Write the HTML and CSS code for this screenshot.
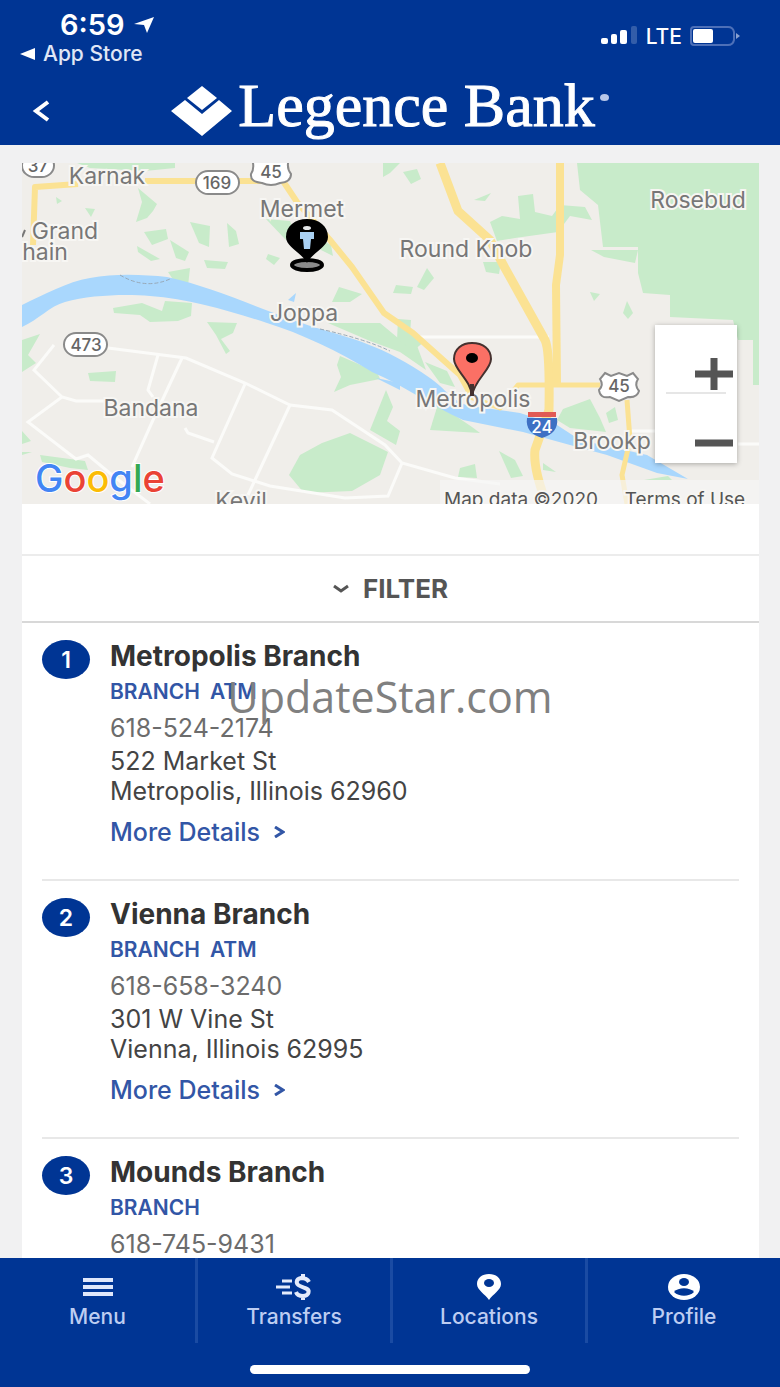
FILE: index.html
```html
<!DOCTYPE html>
<html lang="en">
  <head>
    <meta charset="UTF-8" />
    <meta name="viewport" content="width=device-width, initial-scale=1.0" />
    <title>Legence Bank - Locations</title>
    <link rel="stylesheet" href="styles.css">
  </head>
  <body>
    <header class="header">
      <div class="statusBar">
        <div class="statusLeft">
          <div class="clock">
            6:59
            <svg width="22" height="18" viewBox="0 0 22 18"><path d="M1 8 21 1 14 17 11 9Z" fill="#fff" /></svg>
          </div>
          <a href="#" class="appStore">
            <svg width="15" height="12" viewBox="0 0 15 12"><path d="M0 6 15 0V12Z" fill="#fff" /></svg>
            App Store
          </a>
        </div>
        <div class="statusRight">
          <svg width="38" height="20" viewBox="0 0 38 20" fill="#fff">
            <rect x="1" y="12" width="7" height="6" rx="2" />
            <rect x="11" y="8" width="6" height="10" rx="2" />
            <rect x="20" y="4" width="7" height="14" rx="2" />
            <rect x="31" y="0" width="6" height="18" rx="2" opacity="0.2" />
          </svg>
          <span>LTE</span>
          <svg width="50" height="20" viewBox="0 0 50 20">
            <path d="M4 1H38Q43 1 44 6V14Q43 19 38 19H4Q1 19 1 16V4Q1 1 4 1Z" fill="none" stroke="#4d70b8" stroke-width="2" />
            <path d="M46 7 50 10 46 13Z" fill="#8aa1d0" />
            <rect x="3" y="3" width="20" height="14" rx="2" fill="#fff" />
          </svg>
        </div>
      </div>
      <div class="titleBar">
        <button class="backButton" aria-label="Back">
          <svg width="18" height="22" viewBox="0 0 18 22"><path d="M16 2 4 11 16 20" fill="none" stroke="#fff" stroke-width="4" /></svg>
        </button>
        <div class="logo">
          <svg width="62" height="50" viewBox="0 0 62 50" fill="#fff">
            <path d="M31 0 46 12 31 24 16 12Z" />
            <path d="M14 14 31 28 48 14 61 25 31 50 0 25Z" />
          </svg>
          <span class="logoText">Legence Bank</span>
          <span class="logoDot"></span>
        </div>
      </div>
    </header>

    <main class="content">
      <div class="panel">
        <!-- Map -->
        <div class="map">
          <svg class="mapDrawing" viewBox="22 163 737 341">
            <rect x="22" y="163" width="737" height="341" fill="#f0eeea" />
            <!-- Parks and woods -->
            <g fill="#c8ebca">
              <path d="M577 163 580 190 598 205 603 247 638 247 638 273 643 293 670 295V317L733 320 738 340H753V385H759V163Z" />
              <path d="M77 163H175V168L145 171 90 168Z" />
              <path d="M383 163H400L390 173 383 177Z" />
              <path d="M403 172 417 169 421 179 411 184Z" />
              <path d="M518 196 533 194 535 212 552 216 560 205 585 207 592 220 570 216 558 232 515 238 497 241 490 222 502 216 520 219Z" />
              <path d="M474 200 491 193 485 201Z" />
              <path d="M138 188 157 204 153 211 147 218 136 222 142 202Z" />
              <path d="M85 208 95 209 91 217Z" />
              <path d="M56 197 62 201 57 204Z" />
              <path d="M144 232 166 229 168 239 152 245Z" />
              <path d="M190 222 210 226 209 247 199 243Z" />
              <path d="M227 223 236 231 239 244 229 247Z" />
              <path d="M137 246 160 259 151 261 138 252Z" />
              <path d="M170 240 189 252 185 261 176 258Z" />
              <path d="M204 260 228 262 225 269 207 268Z" />
              <path d="M168 272 190 268 188 286 174 281Z" />
              <path d="M266 219 290 221 302 250 285 239Z" />
              <path d="M316 237 331 245 333 256 321 250Z" />
              <path d="M268 254 280 258 274 265 266 259Z" />
              <path d="M339 287 362 294 350 302 332 302Z" />
              <path d="M328 323 380 323 398 338 416 343 426 370 400 352 370 341Z" />
              <path d="M398 319 411 320 410 334 424 342 414 350 397 340Z" />
              <path d="M425 362 447 371 455 387 440 383Z" />
              <path d="M483 262 501 262 499 274 486 272Z" />
              <path d="M427 268 434 278 424 290 417 287Z" />
              <path d="M396 285 413 287 411 294 393 293Z" />
              <path d="M590 292 600 294 594 301Z" />
              <path d="M627 301 633 313 628 319 623 313Z" />
              <path d="M591 250 638 250 635 263 604 257Z" />
              <path d="M113 308 142 303 162 311 165 301 192 303 191 316 178 321 150 322 140 315 114 313Z" />
              <path d="M207 322 237 323 233 333 221 339 230 351 226 354 216 335Z" />
              <path d="M22 340 40 334 28 355 36 363 22 372Z" />
              <path d="M88 373 116 371 115 382 90 381Z" />
              <path d="M340 356 377 372 380 379 350 385 334 392 341 377 337 365Z" />
              <path d="M386 390 393 407 387 421 400 431 396 445 370 430Z" />
              <path d="M300 455 322 443 350 433 388 452 380 475 352 491 304 493 289 475Z" />
              <path d="M40 455 85 461 88 470 70 468 42 462Z" />
              <path d="M22 431 31 441 22 444ZM22 452 32 452 22 455Z" />
              <path d="M438 404 472 427 480 433 430 430Z" />
              <path d="M563 409 590 399 600 418 606 432 570 428 557 420Z" />
              <path d="M606 413 615 407 618 420 609 423Z" />
              <path d="M460 468 475 464 477 478 458 477Z" />
              <path d="M499 451 515 460 523 476 511 478Z" />
              <path d="M644 480 668 476 672 480ZM543 463 556 472 543 470Z" />
            </g>
            <!-- Minor roads -->
            <g fill="none" stroke="#fbfbf9" stroke-width="3">
              <path d="M54 345 34 370 62 397 76 401H104" />
              <path d="M62 397 28 422 76 459 88 455 112 475 150 504" />
              <path d="M108 348 186 358 245 383 290 405 332 410 385 445 402 463 455 478 500 484" />
              <path d="M158 355 148 390 153 397M182 358 153 420 132 467M245 384 212 458 232 474 270 486 345 498 388 496 402 463" />
              <path d="M185 428 188 433 214 442M290 405 248 495" />
              <path d="M420 337H549M627 431H655M738 444H759" />
            </g>
            <!-- River -->
            <path d="M22 305C45 294 67 282 90 278C117 273 145 275 167 277C217 288 255 308 317 328C350 338 383 345 430 378C445 388 452 402 470 406L520 413 557 425 580 440 647 455 688 479 657 473 607 455 570 445 523 432 463 420C430 405 405 386 372 372C340 352 300 333 267 323C230 311 190 299 150 296C125 294 90 295 65 302C50 306 38 320 22 327Z" fill="#a9d7fd" />
            <path d="M288 300 296 293 294 302ZM376 378 400 390 400 383Z" fill="#a9d7fd" />
            <path d="M120 275Q145 290 170 279M320 329Q365 339 390 351" fill="none" stroke="#98a9b8" stroke-width="1" stroke-dasharray="4 2" />
            <!-- Highways -->
            <g fill="none" stroke="#fbe293" stroke-width="7" stroke-linejoin="round">
              <path d="M33 245 35 187 78 184M145 181H283L297 202 330 240 352 267 384 313 413 333 460 375 470 393" stroke-width="6" />
              <path d="M440 163 458 211 490 240 505 268 545 340Q550 350 549 410L535 450Q533 467 545 500" stroke-width="9" />
              <path d="M560 163V255L556 285 557 384" stroke-width="8" />
              <path d="M470 397 500 408 518 385H600M627 400 630 440 622 475 627 504" stroke-width="5" />
            </g>
            <rect x="440" y="480" width="319" height="24" fill="#f5f5f5" opacity="0.7" />

            <!-- Road shields -->
            <g fill="#fff" stroke="#8a8a8a" stroke-width="2">
              <rect x="22" y="154" width="32" height="23" rx="12" />
              <rect x="196" y="171" width="43" height="23" rx="12" />
              <rect x="64" y="333" width="43" height="23" rx="12" />
              <path d="M252 159H289Q286 168 291 174 291 182 280 183 271 187 262 183 250 182 251 174 255 168 252 159Z" />
              <path d="M605 373 611 376 619 373 627 376 633 373 638 379Q634 385 639 391 637 398 628 397L619 401 610 397Q600 399 599 390 604 385 600 379Z" />
            </g>
            <path d="M528 412H556V417H528Z" fill="#e05a54" />
            <path d="M527 418H557Q559 433 542 438 525 433 527 418Z" fill="#3d70c4" />
            <g class="shieldText">
              <text x="38" y="172">37</text>
              <text x="217" y="189">169</text>
              <text x="271" y="178">45</text>
              <text x="86" y="351">473</text>
              <text x="619" y="392">45</text>
              <text x="542" y="433" class="interstate">24</text>
            </g>

            <!-- Place names -->
            <g class="placeText">
              <text x="107" y="184">Karnak</text>
              <text x="302" y="217">Mermet</text>
              <text x="65" y="239">Grand</text>
              <text x="45" y="260">hain</text>
              <text x="304" y="321">Joppa</text>
              <text x="466" y="257">Round Knob</text>
              <text x="698" y="208">Rosebud</text>
              <text x="151" y="416">Bandana</text>
              <text x="473" y="407">Metropolis</text>
              <text x="612" y="449">Brookp</text>
              <text x="241" y="509">Kevil</text>
            </g>
            <path d="M22 237 25 230" stroke="#777" stroke-width="2" />
            <g class="mapNote">
              <text x="521" y="506">Map data ©2020</text>
              <text x="685" y="506">Terms of Use</text>
            </g>
            <text x="35" y="492" class="googleText"><tspan fill="#4285f4">G</tspan><tspan fill="#ea4335">o</tspan><tspan fill="#fbbc05">o</tspan><tspan fill="#4285f4">g</tspan><tspan fill="#34a853">l</tspan><tspan fill="#ea4335">e</tspan></text>

            <!-- Markers -->
            <ellipse cx="307" cy="265" rx="15" ry="5" fill="#8a8a8a" stroke="#000" stroke-width="4" />
            <path d="M307 263C300 251 286 247 286 237 286 226 295 219 307 219 319 219 328 226 328 237 328 247 314 251 307 263Z" fill="#000" />
            <ellipse cx="307" cy="228" rx="4" ry="2" fill="#e5e8ea" />
            <path d="M300 232H314V239H311L310 249H304L303 239H300Z" fill="#a9d0f2" />
            <path d="M472 396C471 380 454 370 454 359 454 349 462 343 472 343 483 343 491 349 491 359 491 370 474 380 472 396Z" fill="#fb7065" stroke="#45312f" stroke-width="2" />
            <path d="M472 396V384" stroke="#45312f" stroke-width="4" />
            <ellipse cx="472" cy="358" rx="6" ry="5" fill="#000" />
          </svg>
          <div class="zoomControl">
            <button class="zoomButton" aria-label="Zoom in">
              <svg width="38" height="32" viewBox="0 0 38 32"><path d="M0 16H38M19 0V32" stroke="#555" stroke-width="7" /></svg>
            </button>
            <button class="zoomButton" aria-label="Zoom out">
              <svg width="38" height="32" viewBox="0 0 38 32"><path d="M0 16H38" stroke="#555" stroke-width="7" /></svg>
            </button>
          </div>
        </div>

        <div class="spacer"></div>
        <button class="filterButton">
          <svg width="16" height="10" viewBox="0 0 16 10"><path d="M1 2 8 7 15 2" fill="none" stroke="#555" stroke-width="3" /></svg>
          FILTER
        </button>

        <!-- Branch list -->
        <ol class="branchList">
          <li class="branch">
            <span class="badge">1</span>
            <div class="branchInfo">
              <h2>Metropolis Branch</h2>
              <p class="tags"><span>BRANCH</span><span>ATM</span></p>
              <p class="phone">618-524-2174</p>
              <p class="address">522 Market St<br>Metropolis, Illinois 62960</p>
              <a href="#" class="details">More Details
                <svg width="11" height="12" viewBox="0 0 11 12"><path d="M1 1 9 6 1 11" fill="none" stroke="#3256a6" stroke-width="3" /></svg>
              </a>
            </div>
          </li>
          <li class="branch">
            <span class="badge">2</span>
            <div class="branchInfo">
              <h2>Vienna Branch</h2>
              <p class="tags"><span>BRANCH</span><span>ATM</span></p>
              <p class="phone">618-658-3240</p>
              <p class="address">301 W Vine St<br>Vienna, Illinois 62995</p>
              <a href="#" class="details">More Details
                <svg width="11" height="12" viewBox="0 0 11 12"><path d="M1 1 9 6 1 11" fill="none" stroke="#3256a6" stroke-width="3" /></svg>
              </a>
            </div>
          </li>
          <li class="branch">
            <span class="badge">3</span>
            <div class="branchInfo">
              <h2>Mounds Branch</h2>
              <p class="tags"><span>BRANCH</span></p>
              <p class="phone">618-745-9431</p>
            </div>
          </li>
        </ol>
      </div>
    </main>

    <footer class="footer">
      <nav class="tabs">
        <a href="#" class="tab">
          <svg width="30" height="28" viewBox="0 0 30 28"><path d="M0 7H30M0 14H30M0 21H30" stroke="#dfe7fa" stroke-width="4" /></svg>
          Menu
        </a>
        <a href="#" class="tab">
          <svg width="36" height="28" viewBox="0 0 36 28" fill="none" stroke="#e4ebfb" stroke-width="4">
            <path d="M6 8H16M0 14H14M6 20H16" stroke-width="3" />
            <path d="M33 9C31 5 28 5 25 5 20 6 19 11 24 13L29 15C35 17 33 23 27 23 23 23 21 22 20 19M27 1V5M27 23V27" />
          </svg>
          Transfers
        </a>
        <a href="#" class="tab">
          <svg width="26" height="28" viewBox="0 0 26 28">
            <path d="M13 1C6 1 1 5 1 11 1 17 9 21 13 27 17 21 25 17 25 11 25 5 20 1 13 1Z" fill="#fff" />
            <ellipse cx="13" cy="10" rx="5" ry="4" fill="#003594" />
          </svg>
          Locations
        </a>
        <a href="#" class="tab">
          <svg width="34" height="28" viewBox="0 0 34 28">
            <ellipse cx="17" cy="14" rx="16" ry="13" fill="#fff" />
            <ellipse cx="17" cy="9" rx="5" ry="4" fill="#003594" />
            <path d="M7 19C11 14 23 14 27 19 22 24 12 24 7 19Z" fill="#003594" />
          </svg>
          Profile
        </a>
      </nav>
      <div class="homeBar"></div>
    </footer>

    <div class="watermark">UpdateStar.com</div>
  </body>
</html>
```
FILE: styles.css
```css
* {
  box-sizing: border-box;
}
body {
  font-family: Inter, Roboto, sans-serif;
  background-color: #f1f1f2;
  margin: 0;
  height: 100vh;
  display: flex;
  flex-direction: column;
  overflow: hidden;
  color: #444;
}
svg {
  display: block;
  flex-shrink: 0;
}
button {
  font-family: inherit;
  border: none;
  cursor: pointer;
}
a {
  text-decoration: none;
}
h2,
p {
  margin: 0;
}

/* Header */
.header {
  background-color: #003594;
  color: #fff;
  flex-shrink: 0;
}
.statusBar {
  display: flex;
  justify-content: space-between;
  padding: 10px 40px 0 20px;
}
.clock {
  display: flex;
  align-items: center;
  gap: 8px;
  padding-left: 40px;
  font-size: 29px;
  font-weight: 600;
  line-height: 30px;
}
.appStore {
  display: flex;
  align-items: center;
  gap: 8px;
  color: #e0e7f6;
  font-size: 21px;
  font-weight: 500;
  line-height: 28px;
}
.statusRight {
  display: flex;
  align-items: center;
  gap: 8px;
  height: 52px;
  font-size: 21px;
  font-weight: 500;
}
.titleBar {
  position: relative;
  display: flex;
  align-items: center;
  justify-content: center;
  height: 77px;
  padding-top: 8px;
}
.backButton {
  position: absolute;
  left: 32px;
  padding: 0;
  background: none;
}
.logo {
  display: flex;
  align-items: center;
  gap: 5px;
}
.logoText {
  font-family: "Liberation Serif", serif;
  font-size: 62px;
  line-height: 56px;
  padding-bottom: 12px;
  -webkit-text-stroke: 1px #fff;
}
.logoDot {
  width: 9px;
  height: 7px;
  border-radius: 50%;
  background-color: #b8c8ea;
  margin-bottom: 26px;
}

/* Content */
.content {
  flex: 1;
  min-height: 0;
  overflow: hidden;
  padding: 18px 21px 0 22px;
}
.panel {
  background-color: #fff;
  min-height: 100%;
}
.map {
  position: relative;
}
.mapDrawing {
  width: 100%;
}
.placeText,
.mapNote {
  font-size: 23px;
  fill: #777;
  text-anchor: middle;
  stroke: #f7f6f3;
  stroke-width: 4px;
  paint-order: stroke;
}
.mapNote {
  font-size: 19px;
  fill: #555;
}
.shieldText {
  font-size: 17px;
  font-weight: 500;
  fill: #666;
  text-anchor: middle;
}
.interstate {
  fill: #fff;
}
.googleText {
  font-size: 38px;
  font-weight: 500;
  stroke: #fff;
  stroke-width: 2px;
  paint-order: stroke;
}
.zoomControl {
  position: absolute;
  top: 162px;
  right: 22px;
  width: 82px;
  background-color: #fff;
  box-shadow: 0 1px 5px rgba(0, 0, 0, 0.3);
}
.zoomButton {
  display: flex;
  align-items: flex-end;
  justify-content: flex-end;
  width: 100%;
  height: 69px;
  padding: 0 4px 4px 0;
  background: linear-gradient(#e6e6e6, #e6e6e6) center bottom / 60px 2px no-repeat;
}
.zoomButton:last-child {
  background: none;
}
.spacer {
  height: 52px;
  border-bottom: 2px solid #ececec;
}
.filterButton {
  display: flex;
  align-items: center;
  justify-content: center;
  gap: 14px;
  width: 100%;
  height: 67px;
  border-bottom: 2px solid #d8d8d8;
  background-color: #fff;
  color: #555;
  font-size: 26px;
  font-weight: 700;
}

/* Branch list */
.branchList {
  list-style: none;
  margin: 0;
  padding: 0 20px;
}
.branch {
  display: flex;
  gap: 20px;
  padding: 15px 0 21px;
  border-bottom: 2px solid #e8e8e8;
}
.badge {
  display: flex;
  align-items: center;
  justify-content: center;
  width: 48px;
  height: 39px;
  margin-top: 2px;
  border-radius: 50%;
  background-color: #003594;
  color: #fff;
  font-size: 23px;
  font-weight: 600;
}
.branch h2 {
  color: #333;
  font-size: 28px;
  font-weight: 700;
  line-height: 36px;
}
.tags {
  display: flex;
  gap: 10px;
  color: #3256a6;
  font-size: 21px;
  font-weight: 600;
  line-height: 36px;
}
.phone {
  color: #6c6c6c;
  font-size: 25px;
  line-height: 36px;
}
.address {
  font-size: 25px;
  line-height: 30px;
}
.details {
  display: flex;
  align-items: center;
  gap: 14px;
  color: #3256a6;
  font-size: 25px;
  font-weight: 500;
  line-height: 52px;
}

/* Bottom navigation */
.footer {
  display: flex;
  flex-direction: column;
  align-items: center;
  flex-shrink: 0;
  height: 129px;
  background-color: #003594;
}
.tabs {
  display: grid;
  grid-template-columns: repeat(4, 1fr);
  width: 100%;
  height: 85px;
}
.tab {
  display: flex;
  flex-direction: column;
  align-items: center;
  gap: 2px;
  padding-top: 15px;
  color: #bdcdf2;
  font-size: 21px;
  font-weight: 500;
  line-height: 28px;
}
.tab + .tab {
  border-left: 3px solid #1a4ba3;
}
.homeBar {
  width: 280px;
  height: 9px;
  margin-top: 22px;
  border-radius: 5px;
  background-color: #fff;
}

.watermark {
  position: absolute;
  top: 667px;
  left: 0;
  width: 100%;
  text-align: center;
  font-family: "Open Sans", sans-serif;
  font-size: 43px;
  line-height: 60px;
  color: #808080;
  pointer-events: none;
}
```
